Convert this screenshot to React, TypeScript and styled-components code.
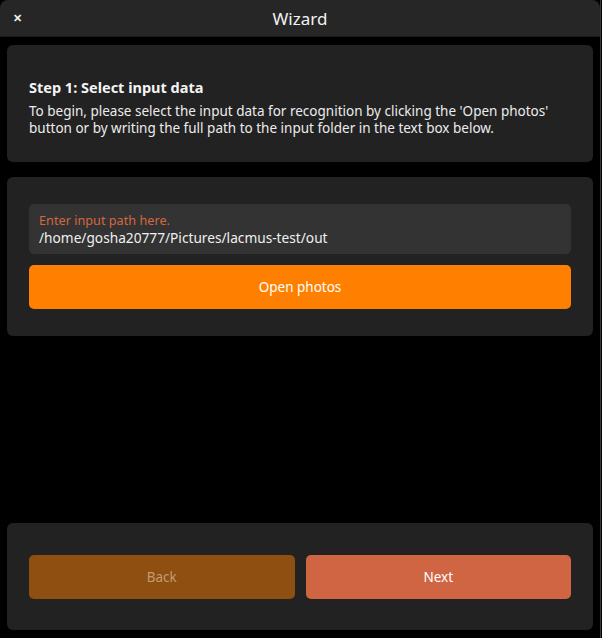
import React from 'react';
import styled, { createGlobalStyle } from 'styled-components';

const GlobalStyle = createGlobalStyle`
    html, body {
        margin: 0;
        padding: 0;
        background: #000;
    }
    body {
        font-family: "Noto Sans", "Open Sans", sans-serif;
        color: #eee;
    }
`;

const Wizard = () => {
    return (
        <>
            <GlobalStyle />
            <Window>
                <TitleBar>
                    <CloseButton>✕</CloseButton>
                    <Title>Wizard</Title>
                </TitleBar>
                <Content>
                    <Panel pad="32px 22px 25px">
                        <StepTitle>Step 1: Select input data</StepTitle>
                        <Description>
                            To begin, please select the input data for recognition by clicking the 'Open photos'
                            button or by writing the full path to the input folder in the text box below.
                        </Description>
                    </Panel>
                    <Panel pad="27px 22px 27px">
                        <InputBox>
                            <InputLabel>Enter input path here.</InputLabel>
                            <InputValue>/home/gosha20777/Pictures/lacmus-test/out</InputValue>
                        </InputBox>
                        <OpenButton>Open photos</OpenButton>
                    </Panel>
                    <Spacer />
                    <Panel pad="32px 22px 31px">
                        <ButtonRow>
                            <NavButton variant="back">Back</NavButton>
                            <NavButton variant="next">Next</NavButton>
                        </ButtonRow>
                    </Panel>
                </Content>
            </Window>
        </>
    );
};

export default Wizard;

// Styled Components
const Window = styled.div`
    width: 600px;
    height: 638px;
    display: flex;
    flex-direction: column;
    background: #000;
    border-right: 1px solid #3a3a3a;
`;

const TitleBar = styled.div`
    height: 36px;
    flex-shrink: 0;
    display: flex;
    align-items: center;
    justify-content: center;
    position: relative;
    background: #262626;
    border-radius: 8px 8px 0 0;
    border-bottom: 1px solid #1a1a1a;
`;

const CloseButton = styled.span`
    position: absolute;
    left: 13px;
    top: 10px;
    font-size: 11px;
    font-weight: bold;
    color: #f0f0f0;
`;

const Title = styled.div`
    font-size: 17px;
    color: #f2f2f2;
    padding-top: 1px;
`;

const Content = styled.div`
    flex: 1;
    display: flex;
    flex-direction: column;
    gap: 15px;
    padding: 8px 7px 8px 7px;
`;

const Panel = styled.div<{ pad: string }>`
    background: #222222;
    border-radius: 6px;
    padding: ${({ pad }) => pad};
    display: flex;
    flex-direction: column;
`;

const Spacer = styled.div`
    flex: 1;
`;

const StepTitle = styled.div`
    font-size: 14.5px;
    font-weight: bold;
    line-height: 20px;
    color: #f4f4f4;
`;

const Description = styled.div`
    margin-top: 6px;
    font-size: 13.5px;
    line-height: 17px;
    color: #ececec;
`;

const InputBox = styled.div`
    height: 50px;
    box-sizing: border-box;
    padding: 8px 10px 6px;
    background: #333333;
    border-radius: 5px;
`;

const InputLabel = styled.div`
    font-size: 12.7px;
    line-height: 16px;
    color: #d4673f;
`;

const InputValue = styled.div`
    font-size: 13.7px;
    line-height: 20px;
    color: #f0f0f0;
`;

const OpenButton = styled.button`
    margin-top: 11px;
    height: 44px;
    border: none;
    border-radius: 5px;
    background: #ff8000;
    color: #fff;
    font-family: inherit;
    font-size: 13.5px;
    cursor: pointer;
`;

const ButtonRow = styled.div`
    display: flex;
    gap: 11px;
`;

const NavButton = styled.button<{ variant: 'back' | 'next' }>`
    flex: 1;
    height: 44px;
    border: none;
    border-radius: 5px;
    font-family: inherit;
    font-size: 13.5px;
    background: ${({ variant }) => (variant === 'back' ? '#8e4f11' : '#d06543')};
    color: ${({ variant }) => (variant === 'back' ? '#c49a74' : '#ffffff')};
    cursor: pointer;
`;
